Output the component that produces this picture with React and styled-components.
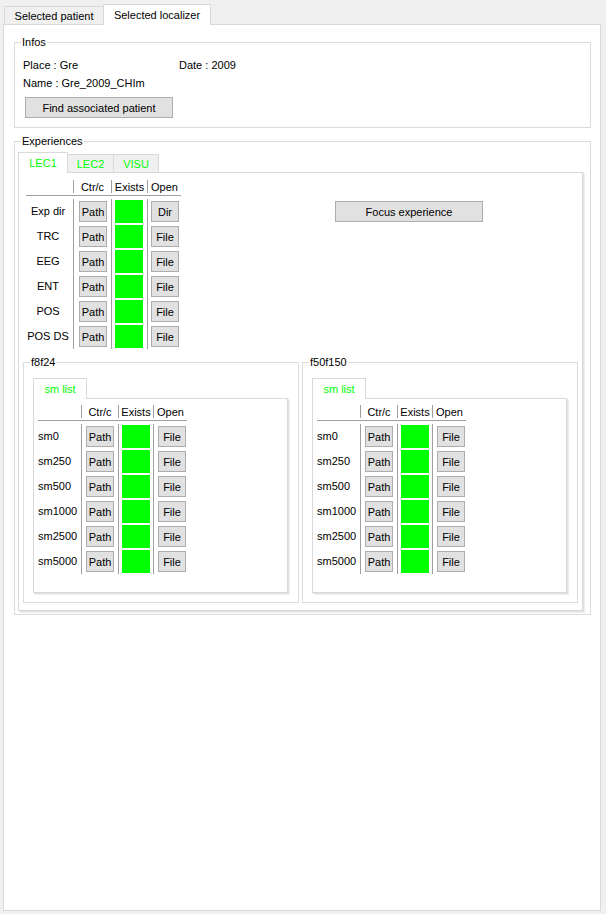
import React from 'react';
import styled, { createGlobalStyle } from 'styled-components';

const GlobalStyle = createGlobalStyle`
  html, body {
    margin: 0;
    padding: 0;
    background: #f0f0f0;
  }
  body {
    font-family: "Liberation Sans", Arial, sans-serif;
    font-size: 11px;
    color: #000;
  }
`;

const LEC_LAYOUT = { label: 47, align: 'center', labelPad: 3, cells: [[37, 5], [35, 3], [33, 3]] };
const SM_LAYOUT = { label: 43, align: 'left', labelPad: 0, cells: [[36, 4], [34, 3], [33, 4]] };

const LEC_ROWS = [
    ['Exp dir', 'Dir'],
    ['TRC', 'File'],
    ['EEG', 'File'],
    ['ENT', 'File'],
    ['POS', 'File'],
    ['POS DS', 'File'],
];

const SM_ROWS = ['sm0', 'sm250', 'sm500', 'sm1000', 'sm2500', 'sm5000'].map(n => [n, 'File']);

const FileTable = ({ layout, rows }) => {
    const [pathCell, existsCell, openCell] = layout.cells;
    return (
        <Table>
            <HeadRow>
                <HeadCell $w={layout.label} />
                <Tick />
                <HeadCell $w={pathCell[0]}>Ctr/c</HeadCell>
                <Tick />
                <HeadCell $w={existsCell[0]}>Exists</HeadCell>
                <Tick />
                <HeadCell $w={openCell[0]}>Open</HeadCell>
            </HeadRow>
            <Rule />
            {rows.map(([name, open]) => (
                <Row key={name}>
                    <RowLabel $w={layout.label} $align={layout.align} $pad={layout.labelPad}>{name}</RowLabel>
                    <Sep />
                    <Cell $w={pathCell[0]} $pl={pathCell[1]}><Btn>Path</Btn></Cell>
                    <Sep />
                    <Cell $w={existsCell[0]} $pl={existsCell[1]}><Exists /></Cell>
                    <Sep />
                    <Cell $w={openCell[0]} $pl={openCell[1]}><Btn>{open}</Btn></Cell>
                </Row>
            ))}
        </Table>
    );
};

const SubGroup = ({ title }) => (
    <Group $w={276}>
        <GroupTitle>{title}</GroupTitle>
        <GroupBody $pad="9px 10px 9px 9px">
            <TabBar>
                <Tab $w={54} $active>sm list</Tab>
            </TabBar>
            <TabPane $shadow $pad="5px 4px 18px 4px">
                <FileTable layout={SM_LAYOUT} rows={SM_ROWS} />
            </TabPane>
        </GroupBody>
    </Group>
);

const App = () => (
    <>
        <GlobalStyle />
        <Window>
            <TabBar $inset={1}>
                <Tab $w={100} $dark>Selected patient</Tab>
                <Tab $w={108} $active $dark>Selected localizer</Tab>
            </TabBar>
            <MainPane>
                <Group $w={577} $mt={10}>
                    <GroupTitle>Infos</GroupTitle>
                    <GroupBody $pad="7px 8px 9px 8px">
                        <InfoGrid>
                            <InfoText>Place : Gre</InfoText>
                            <InfoText>Date : 2009</InfoText>
                            <InfoText>Name : Gre_2009_CHIm</InfoText>
                        </InfoGrid>
                        <WideBtn $ml={2} $mt={5}>Find associated patient</WideBtn>
                    </GroupBody>
                </Group>

                <Group $w={577} $mt={6}>
                    <GroupTitle>Experiences</GroupTitle>
                    <GroupBody $pad="4px 7px 3px 3px">
                        <TabBar>
                            <Tab $w={50} $active>LEC1</Tab>
                            <Tab $w={47}>LEC2</Tab>
                            <Tab $w={46}>VISU</Tab>
                        </TabBar>
                        <TabPane $shadow $pad="6px 4px 7px 4px">
                            <TopSection>
                                <FileTable layout={LEC_LAYOUT} rows={LEC_ROWS} />
                                <WideBtn $ml={154} $mt={22}>Focus experience</WideBtn>
                            </TopSection>
                            <SubGroups>
                                <SubGroup title="f8f24" />
                                <SubGroup title="f50f150" />
                            </SubGroups>
                        </TabPane>
                    </GroupBody>
                </Group>
            </MainPane>
        </Window>
    </>
);

export default App;

const Window = styled.div`
    width: 606px;
    height: 914px;
    box-sizing: border-box;
    padding: 4px 5px 3px 3px;
    display: flex;
    flex-direction: column;
`;

const TabBar = styled.div`
    display: flex;
    align-items: flex-end;
    height: 20px;
    padding-left: ${p => p.$inset || 0}px;
`;

const Tab = styled.div`
    box-sizing: border-box;
    width: ${p => p.$w}px;
    height: ${p => (p.$active ? 21 : 18)}px;
    margin-bottom: ${p => (p.$active ? -1 : 0)}px;
    margin-right: -1px;
    position: relative;
    z-index: ${p => (p.$active ? 2 : 1)};
    display: flex;
    align-items: center;
    justify-content: center;
    padding-bottom: ${p => (p.$active ? 1 : 0)}px;
    border: 1px solid #d9d9d9;
    border-bottom: none;
    background: ${p => (p.$active ? '#fff' : '#f0f0f0')};
    color: ${p => (p.$dark ? '#000' : '#00ff00')};
    white-space: nowrap;
`;

const MainPane = styled.div`
    flex: 1;
    background: #fff;
    border: 1px solid #d9d9d9;
    padding: 0 9px 0 10px;
`;

const TabPane = styled.div`
    background: #fff;
    border: 1px solid #d9d9d9;
    box-shadow: ${p => (p.$shadow ? '1px 1px 0 #e3e3e3, 2px 2px 0 #eeeeee' : 'none')};
    padding: ${p => p.$pad};
`;

const Group = styled.fieldset`
    box-sizing: border-box;
    width: ${p => p.$w}px;
    min-width: 0;
    margin: ${p => p.$mt || 0}px 0 0 0;
    padding: 0;
    border: 1px solid #dcdcdc;
`;

const GroupTitle = styled.legend`
    margin-left: 6px;
    padding: 0 1px;
    line-height: 14px;
    font-size: 11px;
`;

const GroupBody = styled.div`
    padding: ${p => p.$pad};
`;

const InfoGrid = styled.div`
    display: grid;
    grid-template-columns: 156px auto;
    grid-auto-rows: 18px;
    align-items: center;
`;

const InfoText = styled.div`
    white-space: nowrap;
`;

const WideBtn = styled.button`
    box-sizing: border-box;
    width: 148px;
    height: 21px;
    margin: ${p => p.$mt || 0}px 0 0 ${p => p.$ml || 0}px;
    padding: 0;
    background: #e1e1e1;
    border: 1px solid #adadad;
    font-family: inherit;
    font-size: 11px;
    color: #000;
    flex-shrink: 0;
    align-self: flex-start;
`;

const TopSection = styled.div`
    display: flex;
    padding-left: 3px;
`;

const SubGroups = styled.div`
    display: flex;
    gap: 3px;
    margin-top: 6px;
`;

const Table = styled.div`
    display: flex;
    flex-direction: column;
    flex-shrink: 0;
    width: max-content;
`;

const HeadRow = styled.div`
    display: flex;
    height: 16px;
`;

const HeadCell = styled.div`
    width: ${p => p.$w}px;
    text-align: center;
    line-height: 16px;
    white-space: nowrap;
`;

const Tick = styled.div`
    width: 1px;
    margin: 1px 0 2px;
    background: #a0a0a0;
`;

const Rule = styled.div`
    height: 1px;
    background: #a0a0a0;
    margin-bottom: 3px;
`;

const Row = styled.div`
    display: flex;
    height: 25px;
`;

const RowLabel = styled.div`
    box-sizing: border-box;
    width: ${p => p.$w}px;
    padding-right: ${p => p.$pad}px;
    text-align: ${p => p.$align};
    line-height: 25px;
    white-space: nowrap;
`;

const Sep = styled.div`
    width: 1px;
    background: #a0a0a0;
`;

const Cell = styled.div`
    box-sizing: border-box;
    width: ${p => p.$w}px;
    padding-left: ${p => p.$pl}px;
`;

const Btn = styled.button`
    box-sizing: border-box;
    width: 28px;
    height: 21px;
    margin-top: 2px;
    padding: 0;
    background: #e1e1e1;
    border: 1px solid #adadad;
    font-family: inherit;
    font-size: 11px;
    color: #000;
`;

const Exists = styled.div`
    width: 28px;
    height: 23px;
    margin-top: 1px;
    background: #00ff00;
`;
